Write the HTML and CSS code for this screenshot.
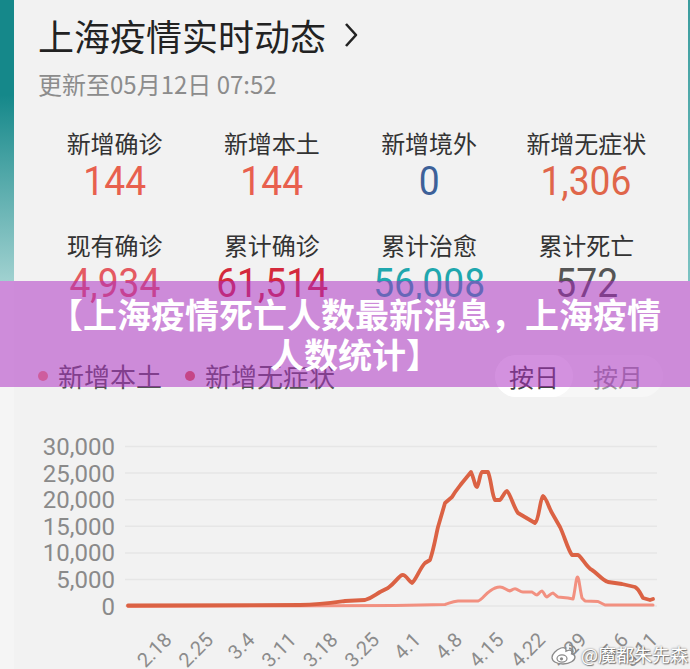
FILE: index.html
```html
<!DOCTYPE html>
<html lang="zh-CN">
<head>
    <meta charset="UTF-8">
    <meta name="viewport" content="width=device-width, initial-scale=1.0">
    <title>上海疫情实时动态</title>
    <link rel="stylesheet" href="styles.css">
</head>
<body>
<div class="screen">
    <div class="edge-left"></div>

    <main class="card">
        <h1 class="title">
            上海疫情实时动态
            <svg class="chevron" width="14" height="26" viewBox="0 0 14 26">
                <path d="M2 2 L12 13 L2 24" fill="none" stroke="#222" stroke-width="2.6" stroke-linejoin="round"/>
            </svg>
        </h1>
        <p class="updated">更新至05月12日 07:52</p>

        <div class="stats">
            <div class="stat">
                <div class="stat-label">新增确诊</div>
                <div class="stat-value red"><span>144</span></div>
            </div>
            <div class="stat">
                <div class="stat-label">新增本土</div>
                <div class="stat-value red"><span>144</span></div>
            </div>
            <div class="stat">
                <div class="stat-label">新增境外</div>
                <div class="stat-value blue"><span>0</span></div>
            </div>
            <div class="stat">
                <div class="stat-label">新增无症状</div>
                <div class="stat-value orange"><span>1,306</span></div>
            </div>
            <div class="stat">
                <div class="stat-label">现有确诊</div>
                <div class="stat-value pink"><span>4,934</span></div>
            </div>
            <div class="stat">
                <div class="stat-label">累计确诊</div>
                <div class="stat-value crimson"><span>61,514</span></div>
            </div>
            <div class="stat">
                <div class="stat-label">累计治愈</div>
                <div class="stat-value teal"><span>56,008</span></div>
            </div>
            <div class="stat">
                <div class="stat-label">累计死亡</div>
                <div class="stat-value gray"><span>572</span></div>
            </div>
        </div>

        <div class="chart-head">
            <div class="legend">
                <span class="legend-item"><i class="dot dot-local"></i>新增本土</span>
                <span class="legend-item"><i class="dot dot-asym"></i>新增无症状</span>
            </div>
            <div class="toggle">
                <span class="seg active">按日</span>
                <span class="seg">按月</span>
            </div>
        </div>

        <svg class="chart" width="674" height="272" viewBox="14 397 674 272">
            <g class="grid">
                <line x1="125" x2="657" y1="446.5" y2="446.5"/>
                <line x1="125" x2="657" y1="473.1" y2="473.1"/>
                <line x1="125" x2="657" y1="499.7" y2="499.7"/>
                <line x1="125" x2="657" y1="526.3" y2="526.3"/>
                <line x1="125" x2="657" y1="552.9" y2="552.9"/>
                <line x1="125" x2="657" y1="579.5" y2="579.5"/>
                <line x1="125" x2="657" y1="606.1" y2="606.1"/>
            </g>
            <g class="y-labels">
                <text x="115" y="455">30,000</text>
                <text x="115" y="481.6">25,000</text>
                <text x="115" y="508.2">20,000</text>
                <text x="115" y="534.8">15,000</text>
                <text x="115" y="561.4">10,000</text>
                <text x="115" y="588">5,000</text>
                <text x="115" y="614.6">0</text>
            </g>
            <!-- 新增本土 -->
            <path class="line-local" d="M128 606.5 L395 605.5 L445 604.5 C450 603 452 601.5 458 601 L478 601 C482 600 485 594 490 591 C494 588 497 587 500 587 C504 587 506 590 510 591 C512 590 514 588 516 589 C519 590 520 592 523 592 L532 592 C534 593 535 595 537 595 C539 594 540 591 542 591 C544 592 545 597 547 597 C549 596 551 593 553 593 C555 594 556 596 558 597 L568 598 L573 599 C575 592 576 577 577.5 577 C579 577 580 590 582 598 L585 601 L598 601.5 L605 605 L653 605"/>
            <!-- 新增无症状 -->
            <path class="line-asym" d="M128 605.5 L300 605 C320 604.5 330 603 345 601 L365 600 C372 598 375 595 380 592 L388 588 C395 583 398 577 402 575 C406 574 409 582 412 583 C416 580 420 568 425 563 L430 560 C434 548 436 535 438 527 L445 503 L452 497 C456 490 459 487 462 483 L471 472 C474 478 475 487 477 487 C479 485 480 473 482 472 L488 472 C491 478 492 496 495 500 L500 500 C502 498 505 491 507 491 C510 493 514 508 518 513 L535 523 C539 521 540 498 543 496 C546 497 549 508 552 513 L560 527 C564 535 568 550 572 555 L578 555 C582 557 586 567 592 570 C597 573 602 580 608 582 L622 584 L635 587 C639 589 641 595 643 598 L650 600 L653 599"/>
            <g class="x-labels">
                <text transform="translate(173 641) rotate(-45)">2.18</text>
                <text transform="translate(214.5 641) rotate(-45)">2.25</text>
                <text transform="translate(256 641) rotate(-45)">3.4</text>
                <text transform="translate(297.5 641) rotate(-45)">3.11</text>
                <text transform="translate(339 641) rotate(-45)">3.18</text>
                <text transform="translate(380.5 641) rotate(-45)">3.25</text>
                <text transform="translate(422 641) rotate(-45)">4.1</text>
                <text transform="translate(463.5 641) rotate(-45)">4.8</text>
                <text transform="translate(505 641) rotate(-45)">4.15</text>
                <text transform="translate(546.5 641) rotate(-45)">4.22</text>
                <text transform="translate(588 641) rotate(-45)">4.29</text>
                <text transform="translate(629.5 641) rotate(-45)">5.6</text>
                <text transform="translate(659 641) rotate(-45)">5.11</text>
            </g>
        </svg>
    </main>

    <div class="edge-right"></div>

    <div class="banner">【上海疫情死亡人数最新消息，上海疫情人数统计】</div>

    <div class="watermark">
        <svg width="28" height="22" viewBox="0 0 28 22">
            <path d="M11 5 C6 7 2 11 2 14.5 C2 18.5 7 21 13 21 C20 21 25 17.5 25 14 C25 11.5 22.5 11 21.5 10.8 C22.5 8.5 21.5 6.5 18 7.5 L16 8.2 C16.5 5.5 14.5 3.8 11 5 Z" fill="#fff" stroke="#8a8a8a" stroke-width="1.3"/>
            <ellipse cx="12" cy="15.5" rx="5" ry="3.6" fill="none" stroke="#8a8a8a" stroke-width="1.2"/>
            <circle cx="11.5" cy="15.8" r="1.6" fill="#8a8a8a"/>
            <path d="M19 2 A7 7 0 0 1 26 9" fill="none" stroke="#8a8a8a" stroke-width="1.6"/>
            <path d="M19 5.2 A3.8 3.8 0 0 1 22.8 9" fill="none" stroke="#8a8a8a" stroke-width="1.6"/>
        </svg>
        <span>@魔都朱先森</span>
    </div>
</div>
</body>
</html>
```

FILE: styles.css
```css
body {
    margin: 0;
    background-color: #f2f2f2;
    font-family: "Noto Sans CJK SC", sans-serif;
}

.screen {
    position: relative;
    display: flex;
    width: 690px;
    height: 669px;
    overflow: hidden;
}

.edge-left {
    flex: none;
    width: 14px;
    background: linear-gradient(to bottom, #15888a 0, #15888a 95px, #a0d1d0 281px, #f5f5f5 281px, #f5f5f5 100%);
}

.edge-right {
    flex: none;
    width: 2px;
    background: linear-gradient(to bottom, #3a9c9e 0, #7cc3c3 281px, #f2f2f2 281px);
}

.card {
    flex: 1;
    min-width: 0;
}

.title {
    display: flex;
    align-items: center;
    margin: 0;
    padding: 13px 24px 0;
    font-size: 36px;
    line-height: 44px;
    font-weight: 400;
    color: #222;
}

.chevron {
    margin-left: 18px;
}

.updated {
    margin: 12px 0 0;
    padding-left: 24px;
    font-size: 24px;
    line-height: 30px;
    color: #8c8c8c;
}

/* stats grid */
.stats {
    display: grid;
    grid-template-columns: repeat(4, 1fr);
    row-gap: 26px;
    padding: 29px 23px 0 22px;
    text-align: center;
}

.stat-label {
    font-size: 24px;
    line-height: 30px;
    color: #333;
}

.stat-value {
    margin-top: 2px;
    font-family: Roboto, sans-serif;
    font-size: 40px;
    line-height: 44px;
}

.stat-value span {
    display: inline-block;
    transform: scaleX(0.93);
}

.red { color: #e8604e; }
.blue { color: #3d6199; }
.orange { color: #e0664a; }
.pink { color: #e45a62; }
.crimson { color: #d42a3c; }
.teal { color: #1fa7ae; }
.gray { color: #555; }

/* legend + day/month switch */
.chart-head {
    display: flex;
    justify-content: space-between;
    align-items: center;
    height: 42px;
    margin-top: 49px;
    padding: 0 25px 0 24px;
}

.legend {
    display: flex;
    gap: 23px;
    font-size: 26px;
    line-height: 32px;
    color: #555;
}

.legend-item {
    display: flex;
    align-items: center;
    gap: 10px;
}

.dot {
    width: 10px;
    height: 10px;
    border-radius: 50%;
}

.dot-local { background-color: #f59278; }
.dot-asym { background-color: #e26248; }

.toggle {
    display: flex;
    gap: 6px;
    height: 42px;
    padding-right: 6px;
    border-radius: 21px;
    background-color: #f7f7f7;
}

.seg {
    padding: 0 14px;
    border-radius: 21px;
    font-size: 25px;
    line-height: 42px;
    color: #9a9a9a;
}

.seg.active {
    background-color: #fff;
    color: #444;
}

/* chart */
.chart {
    display: block;
}

.grid line {
    stroke: #e6e6e6;
    stroke-width: 1.5;
}

.y-labels text {
    font-family: Roboto, sans-serif;
    font-size: 24px;
    fill: #8a8a8a;
    text-anchor: end;
}

.x-labels text {
    font-family: Roboto, sans-serif;
    font-size: 20px;
    fill: #8c8c8c;
    text-anchor: end;
}

.line-local,
.line-asym {
    fill: none;
    stroke-linejoin: round;
    stroke-linecap: round;
}

.line-local {
    stroke: #f29080;
    stroke-width: 3;
}

.line-asym {
    stroke: #db6244;
    stroke-width: 3.8;
}

/* title strip laid over the page */
.banner {
    position: absolute;
    top: 281px;
    left: 0;
    right: 0;
    height: 106px;
    box-sizing: border-box;
    padding: 13px 26px 0 46px;
    background-color: rgba(170, 44, 194, 0.52);
    color: #fff;
    font-size: 34px;
    line-height: 40px;
    font-weight: 700;
    text-align: center;
}

.watermark {
    position: absolute;
    left: 550px;
    top: 641px;
    display: flex;
    align-items: center;
    gap: 3px;
    font-size: 18px;
    color: #fff;
    text-shadow: 0 0 2px #666, 1px 1px 1px #777;
}
```
